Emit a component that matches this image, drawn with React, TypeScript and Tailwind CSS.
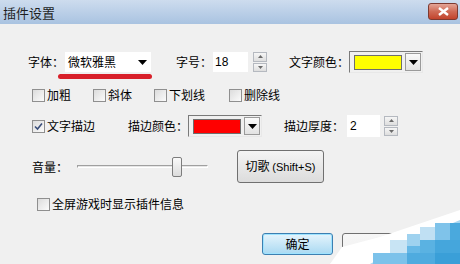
import React from "react"

const font = '"Noto Sans CJK SC", "Liberation Sans", sans-serif'

function Check({ checked = false }: { checked?: boolean }) {
  return (
    <span className="w-[13px] h-[13px] border border-[#8f8f8f] bg-gradient-to-br from-[#dcdcdc] to-[#fbfbfb] flex items-center justify-center shrink-0">
      {checked && (
        <svg width="9" height="9" viewBox="0 0 9 9">
          <path d="M1 4.5 L3.5 7 L8 1.5" stroke="#3a4e7a" strokeWidth="1.6" fill="none" />
        </svg>
      )}
    </span>
  )
}

function Spin() {
  return (
    <div className="flex flex-col gap-[1px] w-[14px] h-[20px]">
      <div className="flex-1 border border-[#b5b9c0] bg-gradient-to-b from-[#f6f6f6] to-[#dedede] flex items-center justify-center">
        <svg width="5" height="3" viewBox="0 0 5 3"><path d="M0 3 L2.5 0 L5 3Z" fill="#6a6a6a" /></svg>
      </div>
      <div className="flex-1 border border-[#b5b9c0] bg-gradient-to-b from-[#f6f6f6] to-[#dedede] flex items-center justify-center">
        <svg width="5" height="3" viewBox="0 0 5 3"><path d="M0 0 L2.5 3 L5 0Z" fill="#6a6a6a" /></svg>
      </div>
    </div>
  )
}

function Arrow() {
  return (
    <svg width="9" height="5" viewBox="0 0 9 5"><path d="M0 0 L9 0 L4.5 5Z" fill="#000" /></svg>
  )
}

function ColorPick({ color }: { color: string }) {
  return (
    <div className="flex items-center h-[22px] w-[74px] border border-t-[#7a7a7a] border-l-[#7a7a7a] border-r-[#e8e8e8] border-b-[#e8e8e8] bg-[#f0f0f0] pl-[4px] pr-[1px] gap-[3px]">
      <div className="w-[49px] h-[15px] border border-[#6e6e6e]" style={{ background: color }} />
      <div className="w-[16px] h-[18px] border border-[#9a9a9a] bg-gradient-to-b from-[#fafafa] to-[#e2e2e2] flex items-center justify-center">
        <Arrow />
      </div>
    </div>
  )
}

export default function App() {
  return (
    <div className="w-[460px] h-[264px] bg-[#f0f0f0] relative overflow-hidden text-[12px] text-black leading-none" style={{ fontFamily: font }}>
      {/* title bar */}
      <div className="h-[24px] bg-gradient-to-b from-[#cddcee] to-[#a9c3e1] flex items-center justify-between pl-[3px] pr-[2px]">
        <span className="text-[13px] text-[#1e1e1e]">插件设置</span>
        <div className="w-[30px] h-[17px] mb-[2px] rounded-[3px] border border-[#7d3a30] bg-gradient-to-b from-[#e3a597] via-[#cf6a55] to-[#c2432b] flex items-center justify-center">
          <svg width="11" height="9" viewBox="0 0 11 9">
            <path d="M1 1 L10 8 M10 1 L1 8" stroke="#fff" strokeWidth="2.4" />
          </svg>
        </div>
      </div>

      <div className="flex flex-col pt-[27px]">
        {/* row 1 */}
        <div className="flex items-center h-[22px] pl-[28px]">
          <span className="w-[37px]">字体：</span>
          <div className="relative">
            <div className="w-[86px] h-[20px] bg-white flex items-center justify-between pl-[3px] pr-[4px]">
              <span>微软雅黑</span>
              <Arrow />
            </div>
            <div className="absolute left-[-7px] top-[22px] w-[94px] h-[5px] rounded-full bg-[#d8202a]" />
          </div>
          <span className="ml-[25px] w-[37px]">字号：</span>
          <div className="w-[35px] h-[20px] bg-white flex items-center pl-[2px] font-['Liberation_Sans']">18</div>
          <div className="ml-[5px]"><Spin /></div>
          <span className="ml-[22px] w-[60px]">文字颜色：</span>
          <ColorPick color="#ffff00" />
        </div>

        {/* row 2 */}
        <div className="flex items-center h-[14px] mt-[15px] pl-[32px]">
          <Check />
          <span className="ml-[2px] w-[46px]">加粗</span>
          <Check />
          <span className="ml-[2px] w-[46px]">斜体</span>
          <Check />
          <span className="ml-[2px] w-[60px]">下划线</span>
          <Check />
          <span className="ml-[2px]">删除线</span>
        </div>

        {/* row 3 */}
        <div className="flex items-center h-[22px] mt-[13px] pl-[32px]">
          <Check checked />
          <span className="ml-[2px] w-[81px]">文字描边</span>
          <span className="w-[60px]">描边颜色：</span>
          <ColorPick color="#ff0000" />
          <span className="ml-[22px] w-[63px]">描边厚度：</span>
          <div className="w-[33px] h-[22px] bg-white flex items-center pl-[3px] font-['Liberation_Sans']">2</div>
          <div className="ml-[4px]"><Spin /></div>
        </div>

        {/* row 4 */}
        <div className="flex items-center h-[33px] mt-[13px] pl-[32px]">
          <span className="w-[45px]">音量：</span>
          <div className="relative w-[131px] h-[20px] flex items-center">
            <div className="w-full h-[3px] border border-t-[#a0a0a0] border-l-[#a0a0a0] border-r-[#fff] border-b-[#fff] bg-[#e6e6e6]" />
            <div className="absolute left-[95px] top-[0px] w-[10px] h-[20px] rounded-[2px] border border-[#7d7d7d] bg-gradient-to-b from-[#fafafa] to-[#dcdcdc]" />
          </div>
          <div className="ml-[29px] w-[87px] h-[33px] rounded-[3px] border border-[#707070] bg-gradient-to-b from-[#f4f4f4] to-[#dcdcdc] flex items-center justify-center">
            <span>切歌 <span className="text-[11px]" style={{ fontFamily: '"Liberation Sans", sans-serif' }}>(Shift+S)</span></span>
          </div>
        </div>

        {/* row 5 */}
        <div className="flex items-center h-[14px] mt-[14px] pl-[37px]">
          <Check />
          <span className="ml-[2px]">全屏游戏时显示插件信息</span>
        </div>

        {/* buttons */}
        <div className="flex items-center h-[22px] mt-[22px] pl-[262px] gap-[9px]">
          <div className="w-[71px] h-[22px] rounded-[3px] border border-[#3c7fb1] bg-gradient-to-b from-[#e5f4fc] to-[#a9d9f2] shadow-[inset_0_0_0_1px_#9ee3ff] flex items-center justify-center">
            确定
          </div>
          <div className="w-[71px] h-[22px] rounded-[3px] border border-[#707070] bg-gradient-to-b from-[#f7f7f7] to-[#f0f0f0]" />
        </div>
      </div>

      {/* watermark in corner */}
      <svg className="absolute right-0 bottom-0" width="160" height="60" viewBox="0 0 160 60">
        <polygon points="30,60 42,43 80,33 160,6 160,60" fill="#ffffff" />
        <polygon points="70,60 120,33 160,16 160,60" fill="#a9d7f1" />
        <rect x="90" y="36" width="17" height="13" fill="#c8e4f4" />
        <rect x="107" y="30" width="13" height="12" fill="#9fd2ef" />
        <rect x="120" y="23" width="15" height="13" fill="#c0e0f3" />
        <rect x="135" y="19" width="15" height="17" fill="#7fc3ea" />
        <rect x="150" y="19" width="10" height="17" fill="#4aa9dd" />
        <rect x="107" y="42" width="13" height="8" fill="#66b8e6" />
        <rect x="120" y="36" width="15" height="14" fill="#5ab2e2" />
        <rect x="135" y="36" width="25" height="14" fill="#45a6dc" />
        <rect x="73" y="49" width="34" height="11" fill="#7cc2ea" />
        <rect x="107" y="49" width="28" height="11" fill="#4fabdf" />
        <rect x="135" y="49" width="25" height="11" fill="#3a9fd8" />
        <polygon points="30,60 80,33 86,35 60,60" fill="#ffffff" />
      </svg>
    </div>
  )
}
